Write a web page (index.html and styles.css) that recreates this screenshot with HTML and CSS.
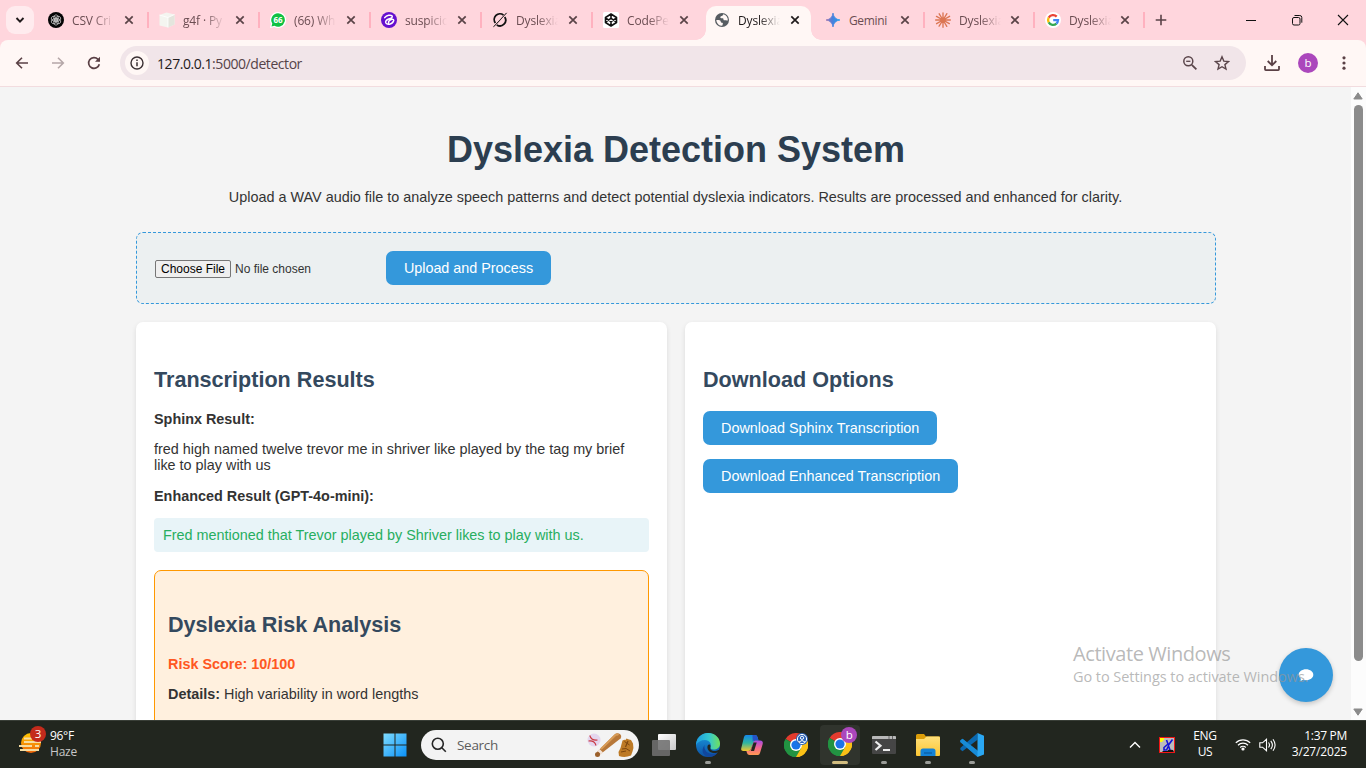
FILE: index.html
```html
<!DOCTYPE html>
<html lang="en">
<head>
<meta charset="utf-8">
<title>Dyslexia Detection System</title>
<link rel="stylesheet" href="styles.css">
</head>
<body>
<svg class="defs" width="0" height="0">
  <defs>
    <symbol id="close" viewBox="0 0 10 10"><path d="M1.3 1.3l7.4 7.4M8.7 1.3L1.3 8.7" fill="none" stroke="currentColor" stroke-width="1.7"/></symbol>
    <symbol id="chrome" viewBox="0 0 24 24">
      <path d="M12 12L1.6 6A12 12 0 0 1 22.4 6z" fill="#e33b2e"/>
      <path d="M12 12L22.4 6A12 12 0 0 1 12 24z" fill="#fbc116"/>
      <path d="M12 12v12A12 12 0 0 1 1.6 6z" fill="#229342"/>
      <path d="M12 6h10.4A12 12 0 0 1 12 24l5.2-9z" fill="#fbc116"/>
      <path d="M1.6 6A12 12 0 0 0 12 24l5.2-9H6.8z" fill="#229342"/>
      <circle cx="12" cy="12" r="6" fill="#fff"/><circle cx="12" cy="12" r="4.6" fill="#1a73e8"/>
    </symbol>
    <linearGradient id="win" x1="0" y1="0" x2="1" y2="1"><stop offset="0" stop-color="#7fdcff"/><stop offset="1" stop-color="#0a91f8"/></linearGradient>
    <linearGradient id="gem" x1="0" y1="0" x2="1" y2="0"><stop offset="0" stop-color="#9a72b0"/><stop offset=".45" stop-color="#4b80dc"/><stop offset="1" stop-color="#1ba1f0"/></linearGradient>
    <linearGradient id="sun" x1="0" y1="0" x2="0" y2="1"><stop offset="0" stop-color="#ffc800"/><stop offset="1" stop-color="#f0640a"/></linearGradient>
    <linearGradient id="edgeTop" x1="0" y1="0" x2="1" y2="0"><stop offset="0" stop-color="#1b9de2"/><stop offset=".55" stop-color="#35c8ce"/><stop offset="1" stop-color="#71e05a"/></linearGradient>
    <linearGradient id="edgeLow" x1="0" y1="0" x2="0" y2="1"><stop offset="0" stop-color="#1b9ae0"/><stop offset="1" stop-color="#0c52a5"/></linearGradient>
    <linearGradient id="copA" x1="0" y1="0" x2="0" y2="1"><stop offset="0" stop-color="#1587ea"/><stop offset=".5" stop-color="#2fb6a0"/><stop offset="1" stop-color="#f4c62c"/></linearGradient>
    <linearGradient id="copB" x1="0" y1="0" x2="0" y2="1"><stop offset="0" stop-color="#a44be6"/><stop offset=".5" stop-color="#f3658e"/><stop offset="1" stop-color="#ff9a52"/></linearGradient>
    <linearGradient id="folder" x1="0" y1="0" x2="0" y2="1"><stop offset="0" stop-color="#ffe07b"/><stop offset="1" stop-color="#fcc633"/></linearGradient>
    <linearGradient id="viewB" x1="0" y1="0" x2="1" y2="1"><stop offset="0" stop-color="#fff"/><stop offset="1" stop-color="#c9c9c9"/></linearGradient>
  </defs>
</svg>

<header class="tabstrip">
  <button class="tab-search"><svg width="10" height="8" viewBox="0 0 10 8"><path d="M1.5 2l3.5 3.6L8.500 2" fill="none" stroke="#201a1b" stroke-width="1.9"/></svg></button>
  <div class="tab"><svg class="fav" viewBox="0 0 16 16"><circle cx="8" cy="8" r="8" fill="#050505"/><g fill="none" stroke="#ccc" stroke-width=".75"><ellipse cx="8" cy="6" rx="2.300" ry="3.200"/><ellipse cx="8" cy="10" rx="2.300" ry="3.200"/><ellipse cx="8" cy="6" rx="2.300" ry="3.200" transform="rotate(60 8 8)"/><ellipse cx="8" cy="10" rx="2.300" ry="3.200" transform="rotate(60 8 8)"/><ellipse cx="8" cy="6" rx="2.300" ry="3.200" transform="rotate(120 8 8)"/><ellipse cx="8" cy="10" rx="2.300" ry="3.200" transform="rotate(120 8 8)"/></g></svg><span class="title">CSV Cri</span><svg class="x"><use href="#close"/></svg></div>
  <div class="tab"><svg class="fav" viewBox="0 0 16 16"><path d="M.5 3l7-2.500 8 2v10l-6.500 3-8.500-2z" fill="#f4f5f0"/><path d="M9 5.500l6.500-3v10l-6.500 3z" fill="#e4e5dd"/><path d="M.5 3L9 5.500v10M9 5.500l6.500-3" fill="none" stroke="#fff" stroke-width=".8"/></svg><span class="title">g4f · Py</span><svg class="x"><use href="#close"/></svg></div>
  <div class="tab"><svg class="fav" viewBox="0 0 16 16"><path d="M8 0a8 8 0 1 1-3.700 15L0 16l1-4.200A8 8 0 0 1 8 0z" fill="#fff"/><path d="M8 1.200a6.800 6.800 0 1 1-3.500 12.600l-3 .7.800-2.900A6.800 6.800 0 0 1 8 1.200z" fill="#10c143"/><text x="8" y="11" class="wa">66</text></svg><span class="title">(66) Wh</span><svg class="x"><use href="#close"/></svg></div>
  <div class="tab"><svg class="fav" viewBox="0 0 16 16"><circle cx="8" cy="8" r="8" fill="#6510cf"/><path d="M3.700 5.600c2-2.600 6-3 7.200-1.800 1.300 1.600-1.300 2.600-3.100 3.200-2.300.8-4 2.300-2.800 4.200 1.300 1.900 5.700 1.200 7.400-1.700 1-1.800-.3-2.600-2.200-1.900-1.800.7-3 1.800-2.600 3.200" fill="none" stroke="#fff" stroke-width="1.500" stroke-linecap="round"/></svg><span class="title">suspicio</span><svg class="x"><use href="#close"/></svg></div>
  <div class="tab"><svg class="fav" viewBox="0 0 16 16"><path d="M11.500 3.100A5.700 5.700 0 0 0 3.400 11M4.800 12.900A5.700 5.700 0 0 0 12.700 5" fill="none" stroke="#111" stroke-width="1.800"/><path d="M1.500 14.800L14.600.9 5.700 10.700z" fill="#111" stroke="#111" stroke-width=".6"/></svg><span class="title">Dyslexia</span><svg class="x"><use href="#close"/></svg></div>
  <div class="tab nosep"><svg class="fav" viewBox="0 0 16 16"><rect width="16" height="16" rx="1.500" fill="#fff"/><path d="M8 2l5.500 3.500v5L8 14l-5.500-3.500v-5zM2.500 6L8 9.700 13.500 6M2.500 10L8 6.300 13.500 10M8 2v4.300M8 9.700V14" fill="none" stroke="#111" stroke-width="1.600" stroke-linejoin="round"/></svg><span class="title">CodePe</span><svg class="x"><use href="#close"/></svg></div>
  <div class="tab active"><svg class="fav" viewBox="0 0 16 16"><circle cx="8" cy="8" r="7" fill="#565c61"/><path d="M9.300 2.200c-.5.600-.3 1-1 1.500-.8.500-2 .4-2 1.600 0 .9.700 1 1.600 1 1.300 0 1.500.3 1.600 1.100.1.700.5.900 1.300.9.800 0 1.500.2 3 .1A5.700 5.700 0 0 0 9.300 2.200zM2.300 8c1.400 0 3.300 0 3.900.6.700.7.300 1.500 1 1.900.7.300 1.600.1 1.700 1 .1.900-.5 1.300-.6 2.200A5.700 5.700 0 0 1 2.300 8z" fill="#fff7f5"/></svg><span class="title">Dyslexia</span><svg class="x"><use href="#close"/></svg></div>
  <div class="tab narrow"><svg class="fav" viewBox="0 0 16 16"><path d="M8 1Q8.800 7.200 15 8 8.800 8.800 8 15 7.200 8.800 1 8 7.200 7.200 8 1z" fill="url(#gem)" stroke="url(#gem)" stroke-width=".8"/></svg><span class="title">Gemini</span><svg class="x"><use href="#close"/></svg></div>
  <div class="tab narrow"><svg class="fav" viewBox="0 0 16 16"><path d="M8 8V.8M8 8v7.200M8 8H.6M8 8h7.400M8 8L4.200 1.800M8 8l3.900-6.300M8 8l3.800 6.300M8 8l-3.900 6.100M8 8L1.500 4.400M8 8l6.600-3.700M8 8l6.300 3.600M8 8l-6.400 3.700" stroke="#dc7653" stroke-width="1.350" stroke-linecap="round"/></svg><span class="title">Dyslexia</span><svg class="x"><use href="#close"/></svg></div>
  <div class="tab narrow"><svg class="fav" viewBox="0 0 16 16"><circle cx="8" cy="8" r="8" fill="#fff"/><g fill="none" stroke-width="2.300"><path d="M11.700 4.600A5 5 0 0 0 3.700 5.600" stroke="#ea4335"/><path d="M3.700 5.600a5 5 0 0 0 0 4.800" stroke="#fbbc05"/><path d="M3.700 10.400a5 5 0 0 0 7.700 1.200" stroke="#34a853"/><path d="M11.400 11.600A5 5 0 0 0 13 8.200H8.200" stroke="#4285f4"/></g></svg><span class="title">Dyslexia</span><svg class="x"><use href="#close"/></svg></div>
  <svg class="newtab" width="12" height="12" viewBox="0 0 12 12"><path d="M6 .7v10.600M.7 6h10.600" stroke="#5a4347" stroke-width="1.600"/></svg>
  <div class="window-controls">
    <svg width="12" height="12" viewBox="0 0 12 12"><path d="M1 6.500h10" stroke="#111"/></svg>
    <svg width="12" height="12" viewBox="0 0 12 12" fill="none" stroke="#111"><rect x="1.500" y="3.500" width="7.500" height="7.500" rx="1.500"/><path d="M3.500 1.500h5.300a2 2 0 0 1 2 2v5.200"/></svg>
    <svg width="12" height="12" viewBox="0 0 12 12"><path d="M1 1l10 10M11 1L1 11" stroke="#111" stroke-width="1.100"/></svg>
  </div>
</header>

<nav class="toolbar">
  <div class="navs">
    <svg width="14" height="14" viewBox="0 0 14 14"><path d="M13 7H2M7 1.700L1.700 7 7 12.300" fill="none" stroke="#5a4045" stroke-width="1.600"/></svg>
    <svg width="14" height="14" viewBox="0 0 14 14"><path d="M1 7h11M7 1.700L12.300 7 7 12.300" fill="none" stroke="#b5a7a8" stroke-width="1.600"/></svg>
    <svg width="14" height="14" viewBox="0 0 14 14"><path d="M12.300 8.200A5.400 5.400 0 1 1 11 3.300L12.500 5" fill="none" stroke="#5a4045" stroke-width="1.700"/><path d="M13 .8v5H8z" fill="#5a4045"/></svg>
  </div>
  <div class="omnibox">
    <span class="info"><svg width="14" height="14" viewBox="0 0 14 14"><circle cx="7" cy="7" r="6" fill="none" stroke="#3b3033" stroke-width="1.400"/><path d="M7 6.200v4M7 3.500v1.500" stroke="#3b3033" stroke-width="1.500"/></svg></span>
    <span class="url"><b>127.0.0.1</b>:5000/detector</span>
    <svg class="lens" width="16" height="16" viewBox="0 0 16 16" fill="none" stroke="#5a454a"><circle cx="6.300" cy="6.300" r="4.500" stroke-width="1.500"/><path d="M9.800 9.800l4.600 4.600" stroke-width="1.800"/><path d="M4.200 6.300h4.200" stroke-width="1.300"/></svg>
    <svg width="16" height="16" viewBox="0 0 16 16"><path d="M8 1.800l1.800 4.300 4.700.4-3.600 3.100 1.100 4.500L8 11.700l-4 2.400 1.100-4.500L1.500 6.500l4.700-.4z" fill="none" stroke="#5a454a" stroke-width="1.400"/></svg>
  </div>
  <svg class="dl" width="16" height="16" viewBox="0 0 16 16" fill="none" stroke="#5a4045" stroke-width="1.800"><path d="M8 0v10M3.700 6L8 10.300 12.300 6M1 11v3.300q0 .8.800.8h12.400q.8 0 .8-.8V11"/></svg>
  <span class="avatar">b</span>
  <svg class="dots" width="4" height="14" viewBox="0 0 4 14" fill="#5a4045"><circle cx="2" cy="1.800" r="1.600"/><circle cx="2" cy="7" r="1.600"/><circle cx="2" cy="12.200" r="1.600"/></svg>
</nav>

<div class="viewport">
  <main class="page">
    <h1>Dyslexia Detection System</h1>
    <p class="intro">Upload a WAV audio file to analyze speech patterns and detect potential dyslexia indicators. Results are processed and enhanced for clarity.</p>
    <form class="upload">
      <div class="file"><span class="choose">Choose File</span><span class="nofile">No file chosen</span></div>
      <button type="button" class="btn send">Upload and Process</button>
    </form>
    <div class="columns">
      <section class="card">
        <h2>Transcription Results</h2>
        <p><strong>Sphinx Result:</strong></p>
        <p class="spoken">fred high named twelve trevor me in shriver like played by the tag my brief<br>like to play with us</p>
        <p><strong class="enh">Enhanced Result (GPT-4o-mini):</strong></p>
        <p class="enhanced">Fred mentioned that Trevor played by Shriver likes to play with us.</p>
        <div class="risk">
          <h2>Dyslexia Risk Analysis</h2>
          <p class="score">Risk Score: 10/100</p>
          <p class="details"><strong>Details:</strong> High variability in word lengths</p>
        </div>
      </section>
      <section class="card">
        <h2>Download Options</h2>
        <button class="btn">Download Sphinx Transcription</button>
        <button class="btn">Download Enhanced Transcription</button>
      </section>
    </div>
  </main>
  <aside class="scrollbar">
    <svg width="10" height="8" viewBox="0 0 10 8"><path d="M5 .8L9.200 7H.8z" fill="#8b8b8b" stroke="#8b8b8b" stroke-linejoin="round"/></svg>
    <i class="thumb"></i>
    <svg width="10" height="8" viewBox="0 0 10 8"><path d="M5 7.200L9.200 1H.8z" fill="#8b8b8b" stroke="#8b8b8b" stroke-linejoin="round"/></svg>
  </aside>
  <div class="chat"><svg width="16" height="14" viewBox="0 0 16 14"><path d="M8 1.200c4 0 7.300 2.400 7.300 5.500S12 12.200 8 12.200c-1 0-2-.1-2.900-.4L2.500 13c.3-1 .4-1.800.1-2.700C1.400 9.300.7 8 .7 6.700.7 3.600 4 1.200 8 1.200z" fill="#fff"/></svg></div>
  <div class="watermark"><div class="wm-big">Activate Windows</div><div class="wm-small">Go to Settings to activate Windows.</div></div>
</div>

<footer class="taskbar">
  <div class="weather">
    <svg width="28" height="30" viewBox="0 0 28 30"><circle cx="12" cy="17" r="10" fill="url(#sun)"/><path d="M5 12.500h8M5 16h17M0 20h13M16 20h4M1 24h19" stroke="#f7dca0" stroke-width="1.900"/><circle cx="19" cy="8" r="8" fill="#c42b1c"/><text x="19" y="12.300" class="count">3</text></svg>
    <div class="temps"><span>96°F</span><span class="haze">Haze</span></div>
  </div>
  <svg class="start" width="24" height="24" viewBox="0 0 24 24"><path d="M.5.500h11v11H.500zM12.500.500h11v11h-11zM.5 12.500h11v11H.500zM12.500 12.500h11v11h-11z" fill="url(#win)"/></svg>
  <div class="search">
    <svg width="16" height="16" viewBox="0 0 16 16" fill="none" stroke="#262626" stroke-width="1.600"><circle cx="6.800" cy="6.800" r="5.500"/><path d="M10.800 10.800l4 4"/></svg>
    <span>Search</span>
    <svg class="ball" width="50" height="26" viewBox="0 0 50 26"><circle cx="8" cy="8" r="6.500" fill="#e4d6ee"/><path d="M3.800 3.500c.8 3 3.200 5 7.700 4.500M2.500 9c3.500-.5 6.500 1 7.500 4.500" fill="none" stroke="#c9363e" stroke-width="1.100"/><path d="M11 20L28.500 2.500q2-2 4.500-1 3.500 2 1.500 5L14 22.500z" fill="#b77738"/><path d="M15 17L29 3.500q2-1.500 3.500-.5" stroke="#d89c57" stroke-width="2" fill="none"/><path d="M12.500 18l3.500 3.500" stroke="#f2e3d8" stroke-width="3"/><circle cx="11.500" cy="22.500" r="2.500" fill="#9a5f2a"/><path d="M32.500 20l2-4 2-7.500q2-1 3-.5l1-1.500 2.500 1 2 .5 2 3.500q1 4-.5 8l-1.500 4q-6 2.500-12 .500z" fill="#bd7a26"/><path d="M38.500 9.500l5 3.500M36 17q4-2 8 2M35 20l5-1" fill="none" stroke="#7d4710" stroke-width="1"/><path d="M42 9l-2.500 6" stroke="#7d4710" stroke-width="1.200"/></svg>
  </div>
  <div class="apps">
    <div class="app"><svg width="24" height="24" viewBox="0 0 24 24"><rect x="6" y="1" width="18" height="16" rx="1" fill="url(#viewB)"/><rect x="0" y="7" width="18" height="16" rx="1" fill="#707070" opacity=".88"/></svg></div>
    <div class="app run"><svg width="24" height="24" viewBox="0 0 24 24"><circle cx="12" cy="12" r="12" fill="url(#edgeLow)"/><path d="M0 11C1 4 6 0 12 0c7 0 12 5 12 10.500 0 4-3 6-6.500 6-2.500 0-3.500-1-3-2.500C16 11 13.500 7 9 7 5 7 1.500 9 0 12z" fill="url(#edgeTop)"/><path d="M8.500 12c-1 5 3 9 8 9 2 0 4-.8 5.500-2-1.500 3-5.500 5-9 5-6-1-8.500-6-4.500-12z" fill="#11479d"/><path d="M14.500 13c0 2-1 3.500 2 4.700 2 .8 4.500.2 6.500-.9l.5 1.700c-2 1.500-5 2-8 1-3.500-1.200-5-5-3.500-7.500.8-1 2.500-.7 2.500 1z" fill="#22261f"/></svg></div>
    <div class="app"><svg width="24" height="24" viewBox="0 0 24 24"><path d="M6 2h9q2 0 2.500 2l1 3.500h-4L11 16q-.7 2-2.500 2H3.500Q.5 18 1.300 15L4 4q.6-2 2-2z" fill="url(#copA)"/><path d="M12.500 2H15q2 0 2.500 2l1 3.500h-4q-1.300 0-1.800 1z" fill="#2453c8"/><path d="M18 22H9.500q-2 0-2.500-2l-.6-2h2.100q1.800 0 2.500-2l2.500-7q.7-1.500 2-1.500h4.500q3.500 0 2.700 3.500L20 20q-.6 2-2 2z" fill="url(#copB)"/><path d="M13.500 9.500h3.200l-2.600 8.500h-3.200z" fill="#22261f"/></svg></div>
    <div class="app"><svg width="24" height="24"><use href="#chrome"/><circle cx="18" cy="6" r="6" fill="#2b63b8"/><circle cx="18" cy="6" r="4.600" fill="none" stroke="#fff"/><circle cx="18" cy="4.800" r="1.600" fill="none" stroke="#fff"/><path d="M15 9q3-3 6 0" fill="none" stroke="#fff"/></svg></div>
    <div class="app current"><svg width="30" height="30" viewBox="0 0 30 30"><svg y="5" width="24" height="24"><use href="#chrome"/></svg><circle cx="21" cy="8" r="8" fill="#ab47bc"/><text x="21" y="12" class="count">b</text></svg></div>
    <div class="app run"><svg width="24" height="24" viewBox="0 0 24 24"><rect y="3" width="24" height="18" rx="1" fill="#454545"/><path d="M0 4q0-1 1-1h22q1 0 1 1v2H0z" fill="#b8b8b8"/><path d="M17 3v3M20.500 3v3" stroke="#666"/><path d="M3.500 8.500l5 4.200-5 4.300" fill="none" stroke="#eee" stroke-width="2.200"/><path d="M11 17h7" stroke="#fff" stroke-width="1.800"/></svg></div>
    <div class="app run"><svg width="24" height="24" viewBox="0 0 24 24"><path d="M0 2.500q0-1.500 1.500-1.500H8l2 2.500H24V10H0z" fill="#dc9d09"/><path d="M0 6h8l2.500-2.500H22.500Q24 3.500 24 5v17q0 1-1 1H1q-1 0-1-1z" fill="url(#folder)"/><path d="M4.500 23v-5q0-2.500 2.500-2.500h10q2.500 0 2.500 2.500v5z" fill="#1382d6"/><path d="M8 20h8" stroke="#0c62aa" stroke-width="1.500"/></svg></div>
    <div class="app run"><svg width="24" height="24" viewBox="0 0 24 24"><path d="M17.500 6.500v11L2.500 5.800.3 7.600v1.500L17.500 24z" fill="#1278c0"/><path d="M17.500 0L.3 15.100v1.500l2.200 1.700L17.500 6.700z" fill="#0a68b0"/><path d="M.3 7.600l2.200-1.800L18 18v6L.3 9z" fill="#188bd6"/><path d="M17.500 0L24 2.700v18.700L17.500 24z" fill="#2aa7f3"/></svg></div>
  </div>
  <div class="tray">
    <svg class="chev" width="12" height="8" viewBox="0 0 12 8"><path d="M1 6.500l5-5 5 5" fill="none" stroke="#fff" stroke-width="1.400"/></svg>
    <svg class="ime" width="16" height="16" viewBox="0 0 16 16"><rect x=".5" y=".5" width="15" height="15" fill="#bcbcbc" stroke="#f01616"/><path d="M1 1h4v2.500H3.500V5H1z" fill="#ff0"/><path d="M3 14h5l2-1.500 4 .5 1 2H4z" fill="#111"/><path d="M7.500 3l1.500 4-4 3.500v2.500h2.500L9.500 9l1.500 4M13.500 2.500L9.500 8" fill="none" stroke="#1212d8" stroke-width="1.600"/></svg>
    <div class="lang"><span>ENG</span><span>US</span></div>
    <svg class="wifi" width="16" height="13" viewBox="0 0 16 13" fill="none" stroke="#fff" stroke-width="1.200"><path d="M.8 4.800a10.200 10.200 0 0 1 14.400 0M3 7.200a7.100 7.100 0 0 1 10 0M5.200 9.500a4 4 0 0 1 5.600 0"/><circle cx="8" cy="11" r="1" fill="#fff"/></svg>
    <svg class="vol" width="17" height="14" viewBox="0 0 17 14" fill="none" stroke="#fff" stroke-width="1.100"><path d="M.8 4.800h2.700L7.500 1.300v11.400L3.500 9.200H.8zM9.500 4.500q2 2.500 0 5M11.800 2.800q3.200 4.200 0 8.400M14 1.200q4.200 5.800 0 11.600"/></svg>
    <div class="clock"><span>1:37 PM</span><span class="date">3/27/2025</span></div>
  </div>
</footer>
</body>
</html>
```
FILE: styles.css
```css
* { box-sizing: border-box; }
body { margin: 0; width: 1366px; height: 768px; overflow: hidden; display: flex; flex-direction: column; background: #ffd6dd; font-family: "Liberation Sans", Arial, sans-serif; color: #333; }
button { border: 0; padding: 0; margin: 0; font: inherit; }
svg { display: block; flex: none; }
.defs { position: absolute; }

/* Tabs */
.tabstrip { height: 40px; flex: none; display: flex; align-items: center; background: #ffd6dd; font: 12px "Open Sans", "Noto Sans", sans-serif; color: #6b4d52; }
.tab-search { width: 28px; height: 28px; margin: 0 6px; border-radius: 9px; background: #ffebee; display: flex; align-items: center; justify-content: center; }
.tab { width: 111px; height: 34px; align-self: flex-end; flex: none; padding: 0 0 6px 8px; display: flex; align-items: center; position: relative; }
.tab.narrow { width: 110px; }
.tab::after { content: ""; position: absolute; right: 2px; top: 6px; width: 2px; height: 16px; background: #ffb1bf; }
.tab.nosep::after { display: none; }
.fav { width: 16px; height: 16px; }
.title { width: 42px; margin-left: 8px; padding-top: 1px; overflow: hidden; white-space: nowrap; letter-spacing: -.15px; line-height: 17px; -webkit-mask-image: linear-gradient(90deg, #000 50%, transparent); mask-image: linear-gradient(90deg, #000 50%, transparent); }
.tab:nth-child(9) .title { -webkit-mask-image: none; mask-image: none; letter-spacing: -.35px; }
.x { width: 10px; height: 10px; margin-left: 10px; color: #5a4347; }
.narrow .x { margin-left: 9px; }
.active { background: #fff7f5; color: #1f1a1b; border-radius: 10px 10px 0 0; width: 105px; margin-right: 6px; }
.active .x { color: #1f1a1b; }
.active::after, .active::before { content: ""; position: absolute; top: auto; bottom: 0; width: 10px; height: 10px; }
.active::before { left: -10px; background: radial-gradient(circle at 0 0, transparent 9.500px, #fff7f5 10px); }
.tab.active::after { right: -10px; top: auto; width: 10px; height: 10px; background: radial-gradient(circle at 100% 0, transparent 9.500px, #fff7f5 10px); }
.wa { font: bold 8px "Open Sans", sans-serif; fill: #fff; text-anchor: middle; }
.newtab { margin-left: 8px; }
.window-controls { margin-left: auto; padding-right: 17px; display: flex; gap: 34px; }

/* Address bar */
.toolbar { height: 47px; flex: none; display: flex; align-items: center; background: #fff7f5; border-bottom: 1px solid #f2dcdf; border-radius: 8px 8px 0 0; }
.navs { display: flex; gap: 22px; padding-left: 15px; width: 120px; }
.omnibox { width: 1126px; height: 34px; border-radius: 17px; background: #f1e5e9; display: flex; align-items: center; padding: 0 16px 0 5px; }
.info { width: 24px; height: 24px; border-radius: 50%; background: #fff7f5; display: flex; align-items: center; justify-content: center; }
.url { margin-left: 8px; margin-right: auto; font: 14px "Open Sans", "Noto Sans", sans-serif; letter-spacing: -.44px; color: #554348; }
.url b { font-weight: 400; color: #1f1a1b; }
.lens { margin-right: 16px; }
.dl { margin-left: 18px; }
.avatar { width: 20px; height: 20px; margin-left: 18px; border-radius: 50%; background: #ab47bc; color: #fff; font: 11.500px/19px "Open Sans", sans-serif; text-align: center; }
.dots { margin-left: 24px; }

/* Page */
.viewport { height: 633px; flex: none; overflow: hidden; display: flex; position: relative; background: #f4f4f4; }
.page { width: 1351px; padding: 42px 135px 0 136px; }
h1 { margin: 0; font-size: 36px; line-height: 41px; color: #2c3e50; text-align: center; }
p { margin: 0 0 14px; font-size: 14.400px; line-height: 16px; white-space: nowrap; }
.intro { margin: 19px 0 27px -1px; text-align: center; }
.upload { height: 72px; border: 1px dashed #3498db; border-radius: 7px; background: #ecf0f1; display: flex; align-items: center; padding: 0 18px; margin-bottom: 18px; }
.file { width: 231px; display: flex; align-items: center; gap: 4px; padding-top: 2px; font-size: 12px; }
.choose { width: 76px; height: 18px; border: 1px solid #767676; border-radius: 2px; background: #efefef; color: #000; line-height: 16px; text-align: center; }
.btn { display: block; height: 34px; padding: 0 18px; border-radius: 7px; background: #3498db; color: #fff; font-size: 14.400px; line-height: 34px; white-space: nowrap; }
.send { width: 165px; padding: 0; text-align: center; letter-spacing: -.02px; }
.btn + .btn { margin-top: 14px; }
.columns { display: grid; grid-template-columns: 1fr 1fr; gap: 18px; }
.card { height: 500px; padding: 45px 18px 0; background: #fff; border-radius: 7px; box-shadow: 0 2px 5px rgba(0,0,0,.1); }
h2 { margin: 0 0 19px; font-size: 21.600px; line-height: 25px; color: #34495e; white-space: nowrap; }
.spoken { margin-bottom: 15px; }
.enhanced { height: 34px; margin-bottom: 18px; padding: 9px; line-height: 16px; background: #e8f4f8; border-radius: 4px; color: #27ae60; }
.risk { height: 300px; border: 1px solid #ff9800; border-radius: 7px; background: #fff0de; padding: 41px 13px 0; }
.score { font-weight: bold; color: #ff5722; }
.scrollbar { width: 15px; background: #fcfcfc; display: flex; flex-direction: column; align-items: center; padding: 5px 1px 4px 0; }
.thumb { width: 9px; height: 556px; margin: 5px 0 auto 1px; background: #8b8b8b; border-radius: 5px; }
.chat { position: absolute; left: 1279px; top: 561px; width: 54px; height: 54px; border-radius: 50%; background: #3498db; display: flex; align-items: center; justify-content: center; box-shadow: 0 2px 5px rgba(0,0,0,.2); }
.watermark { position: absolute; left: 1073px; top: 554px; font-family: "Open Sans", "Noto Sans", sans-serif; color: rgba(150,150,150,.68); white-space: nowrap; }
.wm-big { font-size: 20px; line-height: 26px; letter-spacing: -.42px; }
.wm-small { font-size: 14.500px; line-height: 19px; letter-spacing: -.06px; }

/* Taskbar */
.taskbar { height: 48px; flex: none; display: flex; align-items: center; background: #22261f; border-top: 1px solid #393e37; font: 12px/16px "Open Sans", "Noto Sans", sans-serif; color: #fff; letter-spacing: -.3px; }
.weather { width: 383px; padding-left: 19px; display: flex; align-items: center; gap: 3px; }
.weather svg { margin-top: -7px; }
.count { font: 11.500px "Open Sans", sans-serif; fill: #fff; text-anchor: middle; }
.temps, .lang, .clock { display: flex; flex-direction: column; margin-top: -1px; }
.haze { color: #c8c8c8; letter-spacing: -.2px; }
.search { width: 218px; height: 30px; margin-left: 14px; border-radius: 15px; background: #f3f3f3; display: flex; align-items: center; padding: 0 3px 0 10px; color: #5c5c5c; font-size: 13.500px; gap: 10px; }
.ball { margin-left: auto; }
.apps { display: flex; gap: 4px; margin-left: 5px; }
.app { width: 40px; height: 40px; display: flex; align-items: center; justify-content: center; position: relative; border-radius: 4px; }
.run::after, .current::after { content: ""; position: absolute; left: 17px; bottom: 1px; width: 6px; height: 3px; border-radius: 2px; background: #9a9c98; }
.current { background: #30342d; }
.current > svg { margin: -5px -6px 0 0; }
.current::after { left: 12px; width: 16px; background: #d2bd80; }
.tray { margin-left: auto; padding-right: 19px; display: flex; align-items: center; }
.ime { margin-left: 18px; }
.lang { width: 40px; margin-left: 10px; text-align: center; }
.wifi { margin-left: 10px; }
.vol { margin-left: 8px; }
.clock { width: 71px; text-align: right; }
.date { letter-spacing: -.18px; }
```
